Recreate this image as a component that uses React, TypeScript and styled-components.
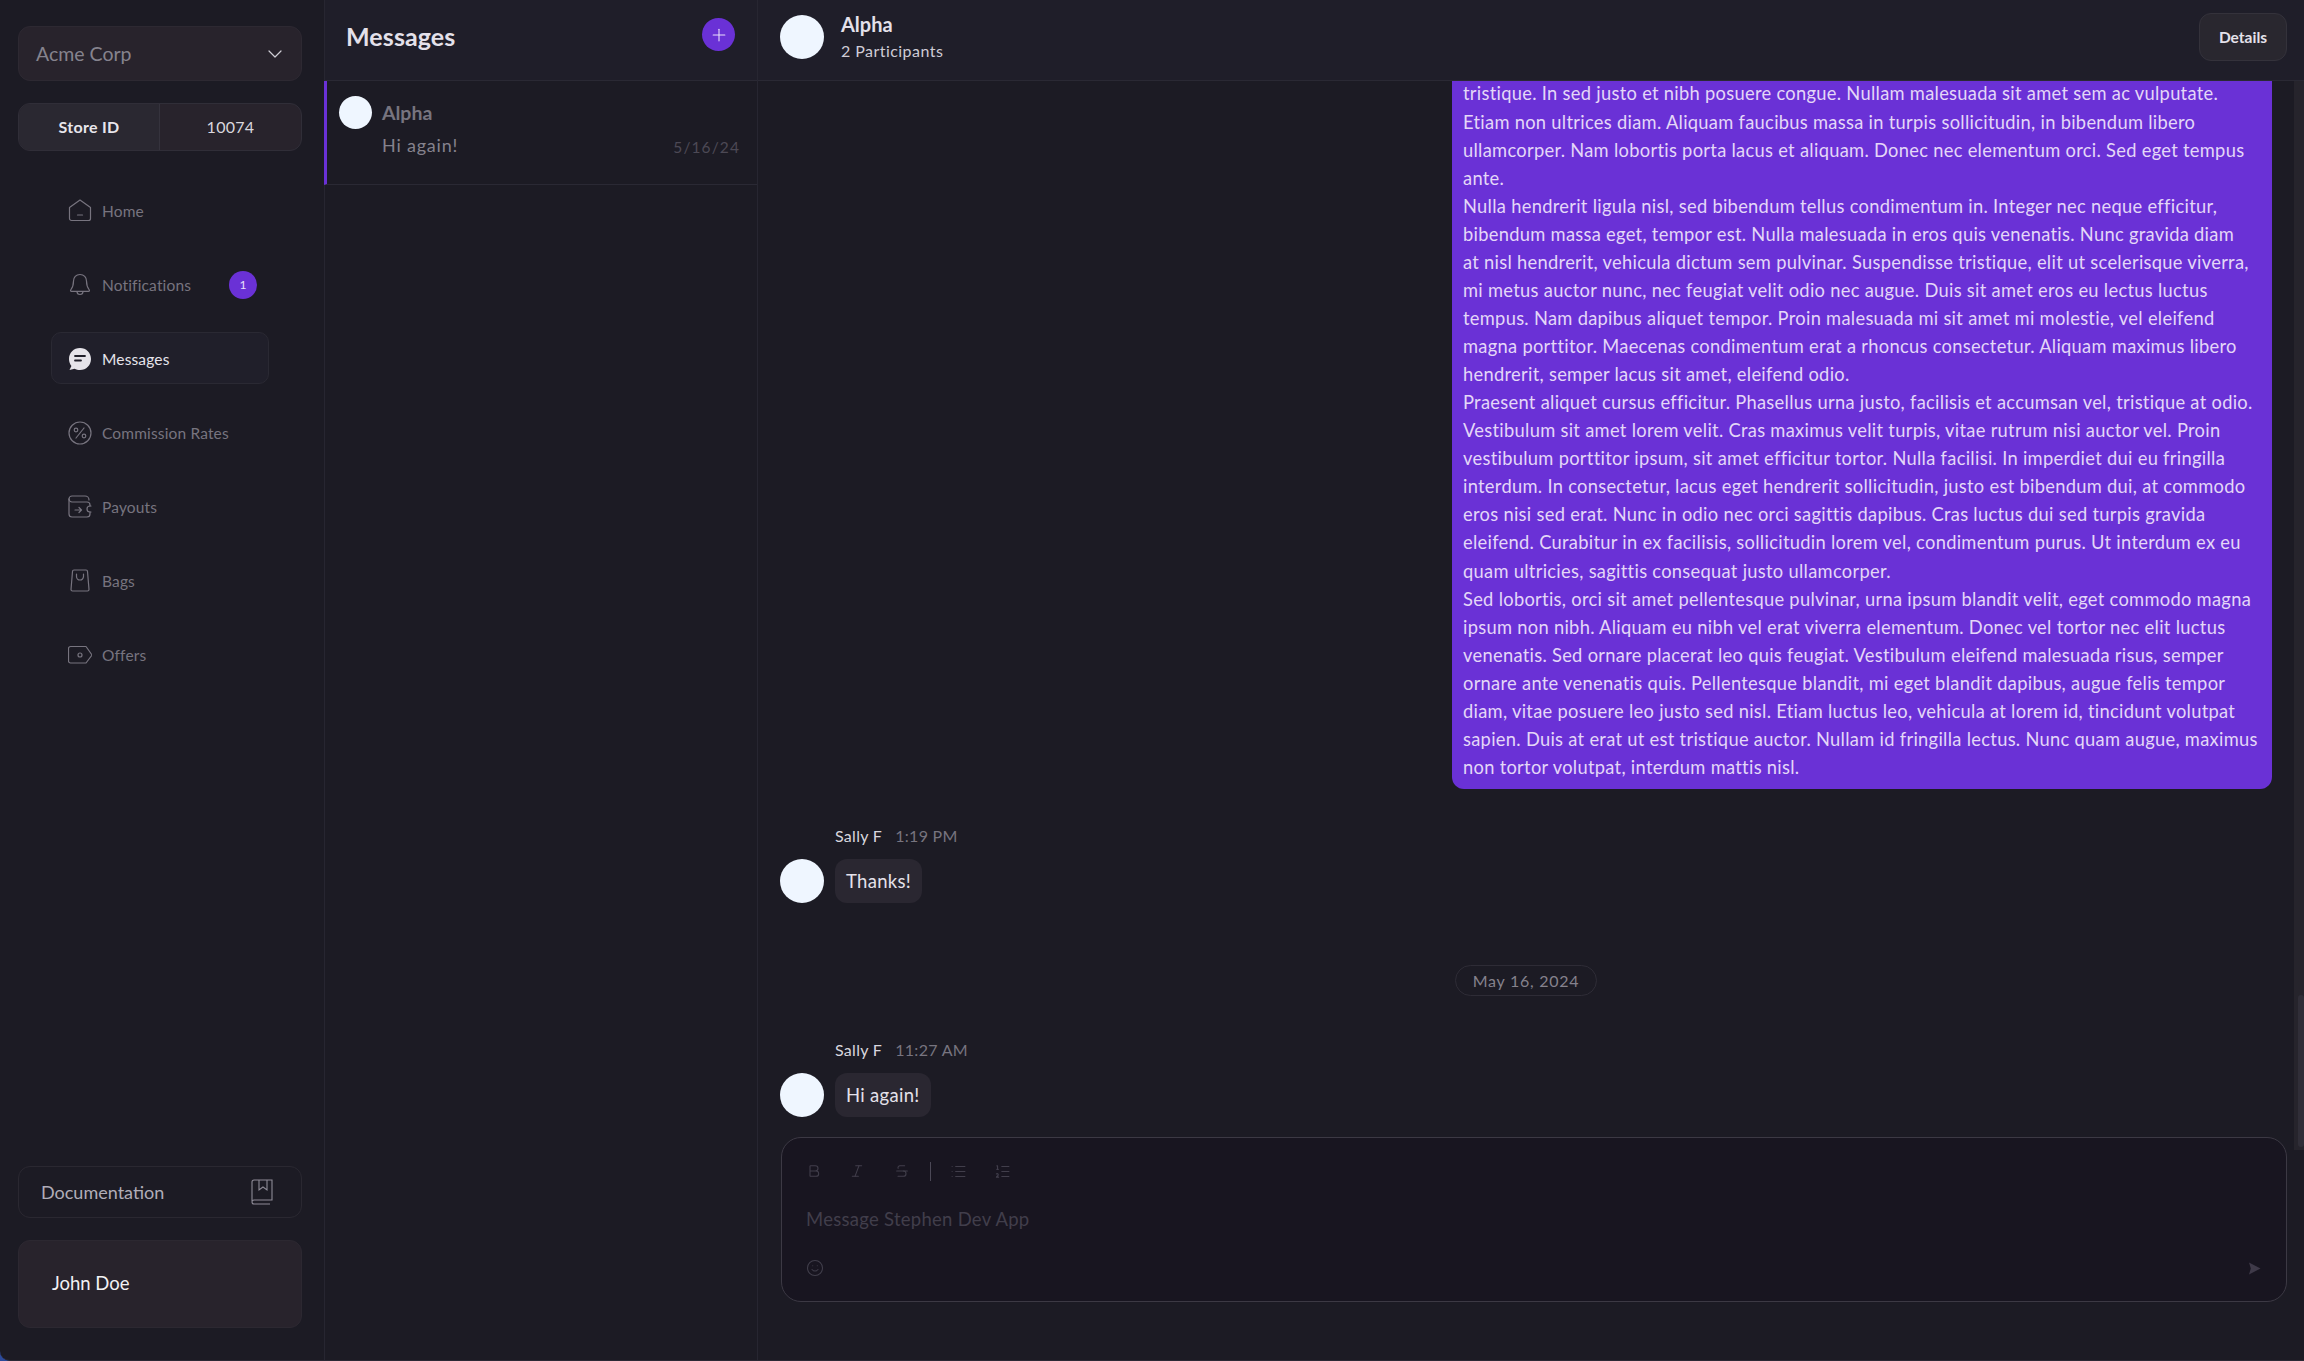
import React from 'react'
import styled, { createGlobalStyle } from 'styled-components'
import { ChevronDown, Plus, Bold, Italic, Strikethrough, List, ListOrdered, Smile } from 'lucide-react'

const GlobalStyle = createGlobalStyle`
  html, body {
    margin: 0;
    height: 100%;
    background: #2c4a9a;
  }
  #root {
    height: 100%;
  }
  * {
    box-sizing: border-box;
  }
`

const Shell = styled.div`
  display: flex;
  height: 1361px;
  overflow: hidden;
  background: #1c1b24;
  border-bottom-left-radius: 10px;
  border-bottom: 1px solid #2b2935;
  font-family: Lato, 'Open Sans', sans-serif;
  color: #fff;
`

const Sidebar = styled.aside`
  width: 324px;
  flex-shrink: 0;
  display: flex;
  flex-direction: column;
  padding: 26px 22px 32px 18px;
`

const OrgSelect = styled.div`
  display: flex;
  align-items: center;
  justify-content: space-between;
  height: 55px;
  padding: 0 14px 0 17px;
  border-radius: 12px;
  border: 1px solid #2d2932;
  background: #28232c;
  color: #86838e;
  font-size: 19.5px;
`

const StoreRow = styled.div`
  display: flex;
  height: 48px;
  margin-top: 22px;
  border-radius: 12px;
  border: 1px solid #302e38;
  background: #28232c;
  overflow: hidden;
  font-size: 16px;
  letter-spacing: 0.3px;
`

const StoreLabel = styled.div`
  width: 141px;
  flex-shrink: 0;
  display: flex;
  align-items: center;
  justify-content: center;
  padding-bottom: 1px;
  background: #2a2831;
  border-right: 1px solid #35333d;
  font-weight: 700;
  color: #e8e6ec;
`

const StoreValue = styled.div`
  flex: 1;
  display: flex;
  align-items: center;
  justify-content: center;
  padding-bottom: 1px;
  color: #d9d7de;
`

const Nav = styled.nav`
  display: flex;
  flex-direction: column;
  gap: 22px;
  margin: 33px 33px 0;
  flex: 1;
`

const NavItem = styled.div<{ $active?: boolean }>`
  display: flex;
  align-items: center;
  gap: 10px;
  height: 52px;
  padding: 1px 16px 0;
  border-radius: 10px;
  border: 1px solid ${p => (p.$active ? '#2a2933' : 'transparent')};
  background: ${p => (p.$active ? '#201f2a' : 'transparent')};
  color: ${p => (p.$active ? '#e6e4ea' : '#77747f')};
  font-size: 15.5px;
  letter-spacing: 0.15px;
`

const NavIcon = styled.svg`
  width: 24px;
  height: 24px;
  flex-shrink: 0;
  fill: none;
  stroke: currentColor;
  stroke-width: 1.2;
  stroke-linecap: round;
  stroke-linejoin: round;
`

const Badge = styled.span`
  margin-left: auto;
  margin-right: -5px;
  width: 28px;
  height: 28px;
  border-radius: 50%;
  display: flex;
  align-items: center;
  justify-content: center;
  background: #6a31d6;
  color: #e9e0fa;
  font-size: 12px;
`

const DocLink = styled.div`
  display: flex;
  align-items: center;
  justify-content: space-between;
  height: 52px;
  padding: 0 28px 0 22px;
  border-radius: 12px;
  border: 1px solid #2a2831;
  color: #b0adb8;
  font-size: 18px;
`

const UserCard = styled.div`
  display: flex;
  align-items: center;
  height: 88px;
  margin-top: 22px;
  padding: 0 33px 3px;
  border-radius: 12px;
  border: 1px solid #2c2831;
  background: #28232c;
  color: #f2f1f4;
  font-size: 18.5px;
`

const ListPane = styled.section`
  width: 434px;
  flex-shrink: 0;
  border-left: 1px solid #272631;
  border-right: 1px solid #272631;
`

const ListHeader = styled.header`
  display: flex;
  align-items: flex-start;
  justify-content: space-between;
  height: 81px;
  padding: 18px 22px 0 21px;
  background: #1f1e29;
  border-bottom: 1px solid #2a2934;
`

const ListTitle = styled.h1`
  margin: 1px 0 0;
  font-size: 25px;
  line-height: 34px;
  font-weight: 700;
  letter-spacing: 0.1px;
  color: #e4e1ea;
`

const AddButton = styled.div`
  width: 33px;
  height: 33px;
  border-radius: 50%;
  display: flex;
  align-items: center;
  justify-content: center;
  background: #6a31d6;
  color: #eadffb;
`

const ConversationRow = styled.div`
  position: relative;
  display: flex;
  gap: 10px;
  height: 104px;
  padding: 15px 17px 0 12px;
  border-bottom: 1px solid #2a2934;
  border-left: 3px solid #6a31d6;
  margin-left: -1px;
`

const Avatar = styled.div<{ $size: number }>`
  width: ${p => p.$size}px;
  height: ${p => p.$size}px;
  flex-shrink: 0;
  border-radius: 50%;
  background: #eff6ff;
`

const ConversationBody = styled.div`
  flex: 1;
  min-width: 0;
`

const ConversationName = styled.div`
  font-size: 19.5px;
  line-height: 34px;
  font-weight: 700;
  color: #77747f;
`

const ConversationFoot = styled.div`
  display: flex;
  align-items: flex-end;
  justify-content: space-between;
  margin-top: -1px;
`

const ConversationText = styled.span`
  font-size: 18px;
  line-height: 32px;
  letter-spacing: 0.8px;
  color: #85828d;
`

const ConversationDate = styled.span`
  font-size: 15.5px;
  line-height: 28px;
  letter-spacing: 1.1px;
  color: #4c4955;
`

const Chat = styled.main`
  position: relative;
  flex: 1;
  min-width: 0;
  display: flex;
  flex-direction: column;
`

const ChatHeader = styled.header`
  display: flex;
  align-items: center;
  gap: 17px;
  height: 81px;
  flex-shrink: 0;
  padding: 0 17px 7px 22px;
  background: #1f1e29;
  border-bottom: 1px solid #2a2934;
`

const ChatTitle = styled.div`
  flex: 1;
`

const ChatName = styled.div`
  margin-top: 1px;
  font-size: 20px;
  line-height: 26px;
  font-weight: 700;
  color: #e4e1ea;
`

const ChatSub = styled.div`
  margin-top: 1px;
  font-size: 16px;
  line-height: 26px;
  letter-spacing: 0.45px;
  color: #cfccd6;
`

const DetailsButton = styled.button`
  width: 88px;
  height: 48px;
  border-radius: 12px;
  border: 1px solid #34323b;
  background: #29272f;
  color: #e4e1ea;
  font-family: inherit;
  font-size: 15.5px;
  font-weight: 700;
`

const ScrollTrack = styled.div`
  position: absolute;
  top: 81px;
  right: 0;
  width: 10px;
  height: 1069px;
  background: #26242c;
`

const ScrollThumb = styled.div`
  position: absolute;
  right: 0;
  bottom: 3px;
  width: 6px;
  height: 152px;
  border-radius: 3px;
  background: #302e38;
`

const Thread = styled.div`
  flex: 1;
  min-height: 0;
  overflow: hidden;
  display: flex;
  flex-direction: column;
  justify-content: flex-end;
  padding: 0 32px 20px 22px;
`

const OwnBubble = styled.div`
  align-self: flex-end;
  flex-shrink: 0;
  width: 820px;
  padding: 0 11px 8px;
  border-radius: 0 0 12px 12px;
  background: #6a31d6;
  color: #e4d7f8;
  font-size: 18.3px;
  line-height: 28.06px;
  letter-spacing: 0.3px;
  white-space: nowrap;
`

const BubbleLine = styled.div``

const Group = styled.div<{ $top: number }>`
  flex-shrink: 0;
  margin-top: ${p => p.$top}px;
`

const Meta = styled.div`
  display: flex;
  gap: 13px;
  margin-left: 55px;
  font-size: 16px;
  line-height: 22px;
  letter-spacing: 0.3px;
`

const Sender = styled.span`
  color: #d9d7de;
`

const Time = styled.span`
  color: #77747f;
`

const MessageRow = styled.div`
  display: flex;
  gap: 11px;
  margin-top: 12px;
`

const Bubble = styled.div`
  display: flex;
  align-items: center;
  height: 44px;
  padding: 0 11px;
  border-radius: 12px;
  background: #2a2731;
  color: #e4e1ea;
  font-size: 18.5px;
  letter-spacing: 0.3px;
`

const DateDivider = styled.div`
  flex-shrink: 0;
  align-self: center;
  display: flex;
  align-items: center;
  height: 31px;
  margin-top: 62px;
  padding: 0 17px;
  border-radius: 16px;
  border: 1px solid #2e2c36;
  color: #85828d;
  font-size: 16px;
  letter-spacing: 0.75px;
`

const Composer = styled.div`
  flex-shrink: 0;
  height: 165px;
  margin: 0 17px 58px 23px;
  padding: 22px 25px 0 24px;
  display: flex;
  flex-direction: column;
  border-radius: 20px;
  border: 1px solid #3c3944;
  background: #181520;
  color: #413e4b;
`

const Toolbar = styled.div`
  display: flex;
  align-items: center;
  height: 22px;
`

const ToolButton = styled.span<{ $width: number }>`
  display: flex;
  align-items: center;
  justify-content: center;
  width: ${p => p.$width}px;
`

const ToolSep = styled.span`
  width: 1px;
  height: 19px;
  background: #4b4856;
`

const Placeholder = styled.div`
  margin-top: 24px;
  font-size: 18.5px;
  line-height: 26px;
  letter-spacing: 0.27px;
`

const ComposerFoot = styled.div`
  display: flex;
  align-items: center;
  justify-content: space-between;
  margin-top: 27px;
`

const iconPaths: Record<string, React.ReactNode> = {
  home: (
    <>
      <path d="M1.500 8.500 12 1l10.500 7.500V19.500a2 2 0 0 1-2 2H3.500a2 2 0 0 1-2-2Z" />
      <path d="M9.500 16h5" />
    </>
  ),
  bell: (
    <>
      <path d="M12 1.500c-4 0-6.500 3-6.500 6.500 0 5-.8 6.500-2.800 9-.4.600 0 1.300.7 1.300h17.200c.7 0 1.100-.7.700-1.300-2-2.500-2.800-4-2.800-9 0-3.500-2.500-6.500-6.500-6.500Z" />
      <path d="M9 18.500c0 2 1.300 3 3 3s3-1 3-3" />
    </>
  ),
  percent: (
    <>
      <circle cx="12" cy="12" r="11" />
      <path d="m8 17 8-10" />
      <circle cx="8" cy="9" r="1.800" />
      <circle cx="16" cy="15" r="1.800" />
    </>
  ),
  wallet: (
    <>
      <path d="M1 4a3 3 0 0 1 3-3h13a4 4 0 0 1 4 4" />
      <path d="M1 4v15a3 3 0 0 0 3 3h15a3 3 0 0 0 3-3v-2" />
      <path d="M1 4a3 3 0 0 0 3 3h15a3 3 0 0 1 3 3v1" />
      <path d="M23 11h-1a3 3 0 0 0 0 6h1" />
      <path d="M7 15h6M11 12.500l2.500 2.500-2.500 2.500" />
    </>
  ),
  bag: (
    <>
      <path d="M4.500 2.500a1.500 1.500 0 0 1 1.500-1.500h12a1.500 1.500 0 0 1 1.500 1.500l1.500 18a1.500 1.500 0 0 1-1.500 1.500H4.500a1.500 1.500 0 0 1-1.500-1.500Z" />
      <path d="M8.500 5v2.500a3.500 3.500 0 0 0 7 0V5" />
    </>
  ),
  tag: (
    <>
      <path d="M.5 5.500a2 2 0 0 1 2-2H18l6 8.500-6 8H2.500a2 2 0 0 1-2-2Z" />
      <circle cx="12" cy="12" r="2" />
    </>
  ),
}

const Icon: React.FC<{ name: string }> = ({ name }) => (
  <NavIcon viewBox="0 0 24 24">{iconPaths[name]}</NavIcon>
)

const MessageGlyph = () => (
  <svg width="24" height="24" viewBox="0 0 24 24">
    <path
      fill="#e6e4ea"
      d="M12 1C5.700 1 1 5.800 1 12c0 2.600.9 5 2.400 6.900L1.500 23l5-1.300C8.100 22.500 10 23 12 23c6.300 0 11-4.800 11-11S18.300 1 12 1Z"
    />
    <path fill="none" stroke="#201f2a" strokeWidth="1.800" strokeLinecap="round" d="M7 9h10M7 13.500h6" />
  </svg>
)

const BookGlyph = () => (
  <svg width="22" height="26" viewBox="0 0 22 26" fill="none" stroke="#8d8a96" strokeWidth="1.100">
    <path d="M1 22V3a2 2 0 0 1 2-2h18v20H3a2 2 0 0 0-2 2 2 2 0 0 0 2 2h16" />
    <path d="M8 1v10l4-3 4 3V1" />
  </svg>
)

const SendGlyph = () => (
  <svg width="13" height="13" viewBox="0 0 13 13">
    <path fill="#3f3a49" d="M1 0.500 12.500 6.500 1 12.500 2.800 6.500Z" />
  </svg>
)

const navItems = [
  { label: 'Home', icon: 'home' },
  { label: 'Notifications', icon: 'bell', badge: 1 },
  { label: 'Messages', active: true },
  { label: 'Commission Rates', icon: 'percent' },
  { label: 'Payouts', icon: 'wallet' },
  { label: 'Bags', icon: 'bag' },
  { label: 'Offers', icon: 'tag' },
]

const bubbleLines = [
  'tristique. In sed justo et nibh posuere congue. Nullam malesuada sit amet sem ac vulputate.',
  'Etiam non ultrices diam. Aliquam faucibus massa in turpis sollicitudin, in bibendum libero',
  'ullamcorper. Nam lobortis porta lacus et aliquam. Donec nec elementum orci. Sed eget tempus',
  'ante.',
  'Nulla hendrerit ligula nisl, sed bibendum tellus condimentum in. Integer nec neque efficitur,',
  'bibendum massa eget, tempor est. Nulla malesuada in eros quis venenatis. Nunc gravida diam',
  'at nisl hendrerit, vehicula dictum sem pulvinar. Suspendisse tristique, elit ut scelerisque viverra,',
  'mi metus auctor nunc, nec feugiat velit odio nec augue. Duis sit amet eros eu lectus luctus',
  'tempus. Nam dapibus aliquet tempor. Proin malesuada mi sit amet mi molestie, vel eleifend',
  'magna porttitor. Maecenas condimentum erat a rhoncus consectetur. Aliquam maximus libero',
  'hendrerit, semper lacus sit amet, eleifend odio.',
  'Praesent aliquet cursus efficitur. Phasellus urna justo, facilisis et accumsan vel, tristique at odio.',
  'Vestibulum sit amet lorem velit. Cras maximus velit turpis, vitae rutrum nisi auctor vel. Proin',
  'vestibulum porttitor ipsum, sit amet efficitur tortor. Nulla facilisi. In imperdiet dui eu fringilla',
  'interdum. In consectetur, lacus eget hendrerit sollicitudin, justo est bibendum dui, at commodo',
  'eros nisi sed erat. Nunc in odio nec orci sagittis dapibus. Cras luctus dui sed turpis gravida',
  'eleifend. Curabitur in ex facilisis, sollicitudin lorem vel, condimentum purus. Ut interdum ex eu',
  'quam ultricies, sagittis consequat justo ullamcorper.',
  'Sed lobortis, orci sit amet pellentesque pulvinar, urna ipsum blandit velit, eget commodo magna',
  'ipsum non nibh. Aliquam eu nibh vel erat viverra elementum. Donec vel tortor nec elit luctus',
  'venenatis. Sed ornare placerat leo quis feugiat. Vestibulum eleifend malesuada risus, semper',
  'ornare ante venenatis quis. Pellentesque blandit, mi eget blandit dapibus, augue felis tempor',
  'diam, vitae posuere leo justo sed nisl. Etiam luctus leo, vehicula at lorem id, tincidunt volutpat',
  'sapien. Duis at erat ut est tristique auctor. Nullam id fringilla lectus. Nunc quam augue, maximus',
  'non tortor volutpat, interdum mattis nisl.',
]

export default function App() {
  return (
    <>
      <GlobalStyle />
      <Shell>
        <Sidebar>
          <OrgSelect>
            Acme Corp
            <ChevronDown size={24} strokeWidth={1.2} color="#d0ced6" />
          </OrgSelect>
          <StoreRow>
            <StoreLabel>Store ID</StoreLabel>
            <StoreValue>10074</StoreValue>
          </StoreRow>
          <Nav>
            {navItems.map(item => (
              <NavItem key={item.label} $active={item.active}>
                {item.icon ? <Icon name={item.icon} /> : <MessageGlyph />}
                {item.label}
                {item.badge && <Badge>{item.badge}</Badge>}
              </NavItem>
            ))}
          </Nav>
          <DocLink>
            Documentation
            <BookGlyph />
          </DocLink>
          <UserCard>John Doe</UserCard>
        </Sidebar>
        <ListPane>
          <ListHeader>
            <ListTitle>Messages</ListTitle>
            <AddButton>
              <Plus size={20} strokeWidth={1.3} />
            </AddButton>
          </ListHeader>
          <ConversationRow>
            <Avatar $size={33} />
            <ConversationBody>
              <ConversationName>Alpha</ConversationName>
              <ConversationFoot>
                <ConversationText>Hi again!</ConversationText>
                <ConversationDate>5/16/24</ConversationDate>
              </ConversationFoot>
            </ConversationBody>
          </ConversationRow>
        </ListPane>
        <Chat>
          <ChatHeader>
            <Avatar $size={44} />
            <ChatTitle>
              <ChatName>Alpha</ChatName>
              <ChatSub>2 Participants</ChatSub>
            </ChatTitle>
            <DetailsButton>Details</DetailsButton>
          </ChatHeader>
          <Thread>
            <OwnBubble>
              {bubbleLines.map(line => (
                <BubbleLine key={line}>{line}</BubbleLine>
              ))}
            </OwnBubble>
            <Group $top={36}>
              <Meta>
                <Sender>Sally F</Sender>
                <Time>1:19 PM</Time>
              </Meta>
              <MessageRow>
                <Avatar $size={44} />
                <Bubble>Thanks!</Bubble>
              </MessageRow>
            </Group>
            <DateDivider>May 16, 2024</DateDivider>
            <Group $top={43}>
              <Meta>
                <Sender>Sally F</Sender>
                <Time>11:27 AM</Time>
              </Meta>
              <MessageRow>
                <Avatar $size={44} />
                <Bubble>Hi again!</Bubble>
              </MessageRow>
            </Group>
          </Thread>
          <Composer>
            <Toolbar>
              <ToolButton $width={16}><Bold size={16} strokeWidth={1.6} /></ToolButton>
              <ToolButton $width={70}><Italic size={16} strokeWidth={1.6} /></ToolButton>
              <ToolButton $width={20}><Strikethrough size={16} strokeWidth={1.6} /></ToolButton>
              <ToolButton $width={18} />
              <ToolSep />
              <ToolButton $width={54}><List size={17} strokeWidth={1.6} /></ToolButton>
              <ToolButton $width={34}><ListOrdered size={17} strokeWidth={1.6} /></ToolButton>
            </Toolbar>
            <Placeholder>Message Stephen Dev App</Placeholder>
            <ComposerFoot>
              <Smile size={18} strokeWidth={1.4} />
              <SendGlyph />
            </ComposerFoot>
          </Composer>
          <ScrollTrack>
            <ScrollThumb />
          </ScrollTrack>
        </Chat>
      </Shell>
    </>
  )
}
